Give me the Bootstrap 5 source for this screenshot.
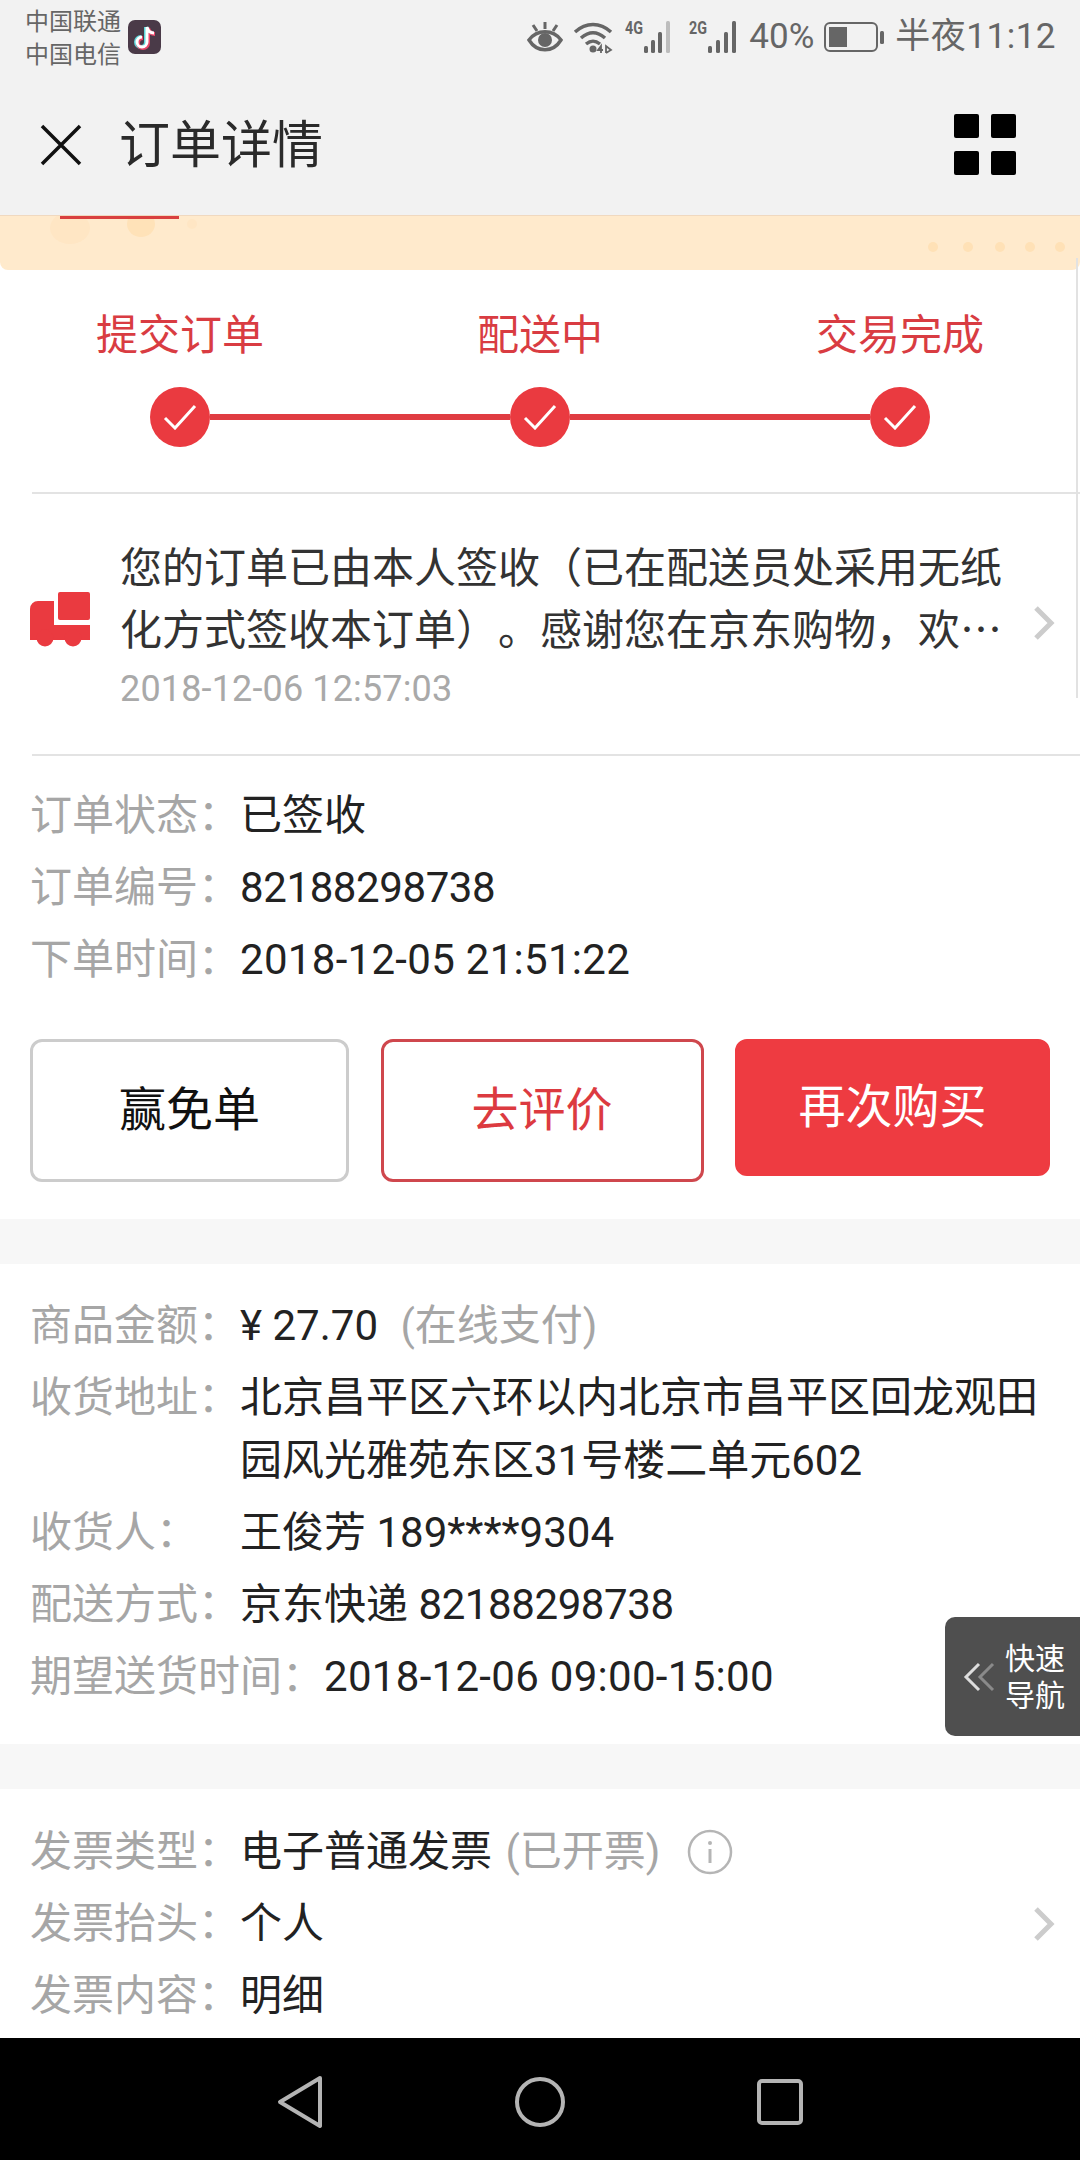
<!DOCTYPE html>
<html lang="zh-CN">
<head>
  <meta charset="UTF-8" />
  <meta name="viewport" content="width=device-width, initial-scale=1.0"/>
  <title>订单详情</title>
  <link rel="stylesheet" href="https://cdn.jsdelivr.net/npm/bootstrap@5.3.0/dist/css/bootstrap.min.css" crossorigin="anonymous" />
  <style>
    html, body { margin: 0; }
    body { width: 1080px; height: 2160px; overflow: hidden; background: #fff; color: #222;
      font-family: Roboto, "Noto Sans CJK SC", sans-serif; font-size: 42px; text-spacing-trim: space-all; }
    /* top chrome */
    .top-chrome { background: #f2f2f2; height: 216px; border-bottom: 1px solid #f0d9c0; }
    .status-bar { height: 74px; padding: 0 24px 0 25px; color: #666; }
    .carrier { font-size: 24px; line-height: 33px; width: 99px; padding-top: 3px; white-space: nowrap; }
    .status-num { font-size: 35px; line-height: 74px; white-space: nowrap; }
    .clock-text { letter-spacing: .5px; margin-left: 11px; }
    .st-gap { margin-left: 10px; }
    .st-near { margin-left: 4px; }
    .head-bar { height: 141px; padding: 0 64px 0 40px; }
    .head-title { font-size: 51px; color: #2a2a2a; margin-left: 37px; line-height: 1; padding-top: 2px; }
    .grid-icon { display: grid; grid-template-columns: 25px 25px; grid-auto-rows: 24px; gap: 13px 12px; }
    .grid-icon span { background: #000; border-radius: 2px; }
    .promo-strip { height: 54px; background: #ffeacc; display: block; border-radius: 0 0 8px 8px; }
    /* progress */
    .steps-box { height: 222px; padding-top: 41px; }
    .step-name { color: #d93c42; font-size: 42px; line-height: 50px; }
    .step-track { padding: 0 150px; margin-top: 26px; }
    .step-dot { width: 60px; height: 60px; border-radius: 50%; background: #ea3a40; flex: none; }
    .step-line { height: 6px; background: #e03c42; flex-grow: 1; }
    .hair-line { height: 2px; background: #e3e3e3; margin-left: 32px; }
    /* logistics message */
    .msg-row { padding: 40px 25px 43px 30px; }
    .truck-icon { margin-bottom: 7px; }
    .msg-body { width: 890px; margin-left: 30px; margin-right: 23px; }
    .msg-text { line-height: 62px; color: #333; font-family: "Noto Sans CJK SC", sans-serif; }
    .msg-date { font-size: 36px; line-height: 44px; margin-top: 9px; color: #a9a9a9; font-family: Roboto, sans-serif; letter-spacing: .15px; }
    /* info rows */
    .info-box { padding: 28px 30px 0 30px; }
    .info-row { line-height: 63px; margin-bottom: 9px; }
    .info-key { color: #a6a6a6; min-width: 210px; flex: none; }
    .info-sub { color: #a6a6a6; }
    .amount-note { margin-left: 12px; }
    .invoice-note { margin-left: 3px; }
    .num-tight { letter-spacing: -.4px; }
    .num-wide { letter-spacing: .3px; }
    .action-row { margin-top: 48px; padding-bottom: 37px; }
    .act-btn { height: 143px; font-size: 47px; border-radius: 12px; border-width: 3px; border-style: solid; background: #fff; padding: 0; }
    .act-gray { width: 319px; border-color: #ccc; color: #111; }
    .act-outline { width: 323px; border-color: #cf474d; color: #dc3a40; }
    .act-solid { width: 315px; height: 137px; background: #ee3b41; border-color: #ee3b41; color: #fff; }
    .gap-band { height: 45px; background: #f7f7f7; }
    .section-two { padding-top: 30px; padding-bottom: 27px; }
    .section-three { padding-top: 31px; }
    .info-glyph { margin-left: 27px; }
    .row-chevron { margin-right: -5px; }
    /* overlays */
    .page-area { position: relative; height: 1822px; overflow: hidden; }
    .quick-nav { position: absolute; right: 0; top: 1401px; width: 135px; height: 119px; background: #4f4f4f;
      border-radius: 10px 0 0 10px; color: #fff; font-size: 30px; line-height: 37px; padding-left: 18px; }
    .quick-text { margin-left: 8px; }
    .scroll-mark { position: absolute; right: 2px; top: 42px; width: 2px; height: 440px; background: #e2e2e2; }
    /* android nav */
    .sys-nav { height: 122px; background: #000; }
    .sys-cell { width: 240px; }
  </style>
</head>
<body>

  <!-- Status bar and title -->
  <div class="top-chrome">
    <div class="status-bar d-flex align-items-center">
      <div class="carrier">中国联通<br>中国电信</div>
      <svg class="ms-1" width="33" height="34" viewBox="0 0 33 34">
        <rect width="33" height="34" rx="7" fill="#4a3a48"/>
        <path d="M19 7v15a5 5 0 1 1-5-5M19 7c1 4 3 6 7 6" fill="none" stroke="#5fd8dc" stroke-width="4" transform="translate(-1 0)"/>
        <path d="M19 7v15a5 5 0 1 1-5-5M19 7c1 4 3 6 7 6" fill="none" stroke="#e8476a" stroke-width="4" transform="translate(1 1)"/>
        <path d="M19 7v15a5 5 0 1 1-5-5M19 7c1 4 3 6 7 6" fill="none" stroke="#fff" stroke-width="3"/>
      </svg>
      <div class="ms-auto d-flex align-items-center">
        <!-- eye -->
        <svg width="36" height="34" viewBox="0 0 36 34">
          <path d="M2 20c8-11 24-11 32 0-8 13-24 13-32 0z" fill="none" stroke="#666" stroke-width="3.5"/>
          <circle cx="18" cy="20" r="7" fill="#666"/>
          <path d="M18 2v7M6 5l4 6M30 5l-4 6" stroke="#666" stroke-width="3"/>
        </svg>
        <!-- wifi -->
        <svg class="st-gap" width="42" height="34" viewBox="0 0 42 34">
          <path d="M2 12c11-10 25-10 36 0M8 18c8-7 16-7 24 0M13 24c5-4 9-4 14 0" fill="none" stroke="#666" stroke-width="3.5"/>
          <circle cx="20" cy="29" r="3.5" fill="#666"/>
          <path d="M28 33v-7l-3 4h5M33 33v-7l5 4-5 3" fill="none" stroke="#666" stroke-width="1.8"/>
        </svg>
        <!-- 4G signal -->
        <svg class="st-gap" width="54" height="46" viewBox="0 -6 54 46">
          <text x="0" y="14" font-family="Roboto" font-weight="700" font-size="19" textLength="18" lengthAdjust="spacingAndGlyphs" fill="#666">4G</text>
          <g fill="#666"><rect x="19" y="26" width="4" height="7" rx="1.5"/><rect x="26" y="20" width="4" height="13" rx="1.5"/><rect x="33" y="12" width="4" height="21" rx="1.5"/></g>
          <rect x="41" y="1" width="4" height="32" rx="1.5" fill="#bdbdbd"/>
        </svg>
        <!-- 2G signal -->
        <svg class="st-gap" width="56" height="46" viewBox="0 -6 56 46">
          <text x="0" y="14" font-family="Roboto" font-weight="700" font-size="19" textLength="18" lengthAdjust="spacingAndGlyphs" fill="#666">2G</text>
          <g fill="#666"><rect x="19" y="26" width="4" height="7" rx="1.5"/><rect x="27" y="20" width="4" height="13" rx="1.5"/><rect x="35" y="12" width="4" height="21" rx="1.5"/><rect x="43" y="1" width="4" height="32" rx="1.5"/></g>
        </svg>
        <span class="status-num st-near">40%</span>
        <!-- battery -->
        <svg class="st-gap" width="60" height="30" viewBox="0 0 60 30">
          <rect x="1" y="1" width="52" height="28" rx="5" fill="none" stroke="#666" stroke-width="2"/>
          <rect x="5" y="5" width="18" height="20" fill="#666"/>
          <rect x="56" y="9" width="4" height="13" rx="1.5" fill="#666"/>
        </svg>
        <span class="status-num clock-text">半夜11:12</span>
      </div>
    </div>
    <div class="head-bar d-flex align-items-center">
      <svg width="42" height="42" viewBox="0 0 42 42"><path d="M2 2l38 38M40 2L2 40" stroke="#111" stroke-width="3.5" fill="none"/></svg>
      <div class="head-title">订单详情</div>
      <div class="grid-icon ms-auto"><span></span><span></span><span></span><span></span></div>
    </div>
  </div>

  <div class="page-area">
    <!-- Banner remnant under the header -->
    <svg class="promo-strip" width="1080" height="54" viewBox="0 0 1080 54">
      <ellipse cx="70" cy="12" rx="20" ry="16" fill="#ffe6c4"/>
      <ellipse cx="141" cy="8" rx="14" ry="13" fill="#ffe2b8"/>
      <circle cx="192" cy="8" r="5" fill="#ffe6c4"/>
      <rect x="60" y="0" width="119" height="3" fill="#d9403f"/>
      <g fill="#ffe1b6"><circle cx="933" cy="31" r="5"/><circle cx="968" cy="31" r="5"/><circle cx="1000" cy="31" r="5"/><circle cx="1030" cy="31" r="5"/><circle cx="1060" cy="31" r="5"/></g>
    </svg>

    <!-- Progress -->
    <div class="steps-box">
      <div class="row g-0 text-center">
        <div class="col-4 step-name">提交订单</div>
        <div class="col-4 step-name">配送中</div>
        <div class="col-4 step-name">交易完成</div>
      </div>
      <div class="step-track d-flex align-items-center">
        <div class="step-dot d-flex align-items-center justify-content-center">
          <svg width="34" height="26" viewBox="0 0 34 26"><path d="M2 14l10 10L32 2" fill="none" stroke="#fff" stroke-width="3"/></svg>
        </div>
        <div class="step-line"></div>
        <div class="step-dot d-flex align-items-center justify-content-center">
          <svg width="34" height="26" viewBox="0 0 34 26"><path d="M2 14l10 10L32 2" fill="none" stroke="#fff" stroke-width="3"/></svg>
        </div>
        <div class="step-line"></div>
        <div class="step-dot d-flex align-items-center justify-content-center">
          <svg width="34" height="26" viewBox="0 0 34 26"><path d="M2 14l10 10L32 2" fill="none" stroke="#fff" stroke-width="3"/></svg>
        </div>
      </div>
    </div>
    <div class="hair-line"></div>

    <!-- Logistics message -->
    <div class="msg-row d-flex align-items-center">
      <svg class="flex-shrink-0 truck-icon" width="60" height="56" viewBox="0 0 60 56">
        <g fill="#ea3a40">
          <rect x="28" y="1" width="32" height="28" rx="2"/>
          <path d="M0 18a8 8 0 0 1 8-8h16v24h36v15H0z"/>
          <circle cx="15" cy="47" r="8.5"/><circle cx="43" cy="47" r="8.5"/>
        </g>
      </svg>
      <div class="msg-body">
        <div class="msg-text">您的订单已由本人签收（已在配送员处采用无纸化方式签收本订单）。感谢您在京东购物，欢…</div>
        <div class="msg-date">2018-12-06 12:57:03</div>
      </div>
      <svg class="flex-shrink-0" width="22" height="34" viewBox="0 0 22 34"><path d="M3 2l15 15L3 32" fill="none" stroke="#ccc" stroke-width="5"/></svg>
    </div>
    <div class="hair-line"></div>

    <!-- Order info -->
    <div class="info-box">
      <div class="info-row d-flex"><span class="info-key">订单状态：</span><span>已签收</span></div>
      <div class="info-row d-flex"><span class="info-key">订单编号：</span><span class="num-tight">82188298738</span></div>
      <div class="info-row d-flex"><span class="info-key">下单时间：</span><span class="num-wide">2018-12-05 21:51:22</span></div>
      <div class="action-row d-flex align-items-start justify-content-between">
        <button type="button" class="btn act-btn act-gray">赢免单</button>
        <button type="button" class="btn act-btn act-outline">去评价</button>
        <button type="button" class="btn act-btn act-solid">再次购买</button>
      </div>
    </div>
    <div class="gap-band"></div>

    <!-- Amount and delivery -->
    <div class="info-box section-two">
      <div class="info-row d-flex"><span class="info-key">商品金额：</span><span>¥ 27.70<span class="info-sub amount-note"> (在线支付)</span></span></div>
      <div class="info-row d-flex"><span class="info-key">收货地址：</span><span>北京昌平区六环以内北京市昌平区回龙观田园风光雅苑东区31号楼二单元602</span></div>
      <div class="info-row d-flex"><span class="info-key">收货人：</span><span>王俊芳 189****9304</span></div>
      <div class="info-row d-flex"><span class="info-key">配送方式：</span><span>京东快递 <span class="num-tight">82188298738</span></span></div>
      <div class="info-row d-flex"><span class="info-key">期望送货时间：</span><span class="num-wide">2018-12-06 09:00-15:00</span></div>
    </div>
    <div class="gap-band"></div>

    <!-- Invoice -->
    <div class="info-box section-three">
      <div class="info-row d-flex align-items-center"><span class="info-key">发票类型：</span><span>电子普通发票 <span class="info-sub invoice-note">(已开票)</span></span>
        <svg class="info-glyph" width="46" height="46" viewBox="0 0 46 46"><circle cx="23" cy="23" r="21" fill="none" stroke="#b5b5b5" stroke-width="2.5"/><circle cx="23" cy="14" r="2" fill="#b5b5b5"/><path d="M23 20v14" stroke="#b5b5b5" stroke-width="3"/></svg>
      </div>
      <div class="info-row d-flex align-items-center"><span class="info-key">发票抬头：</span><span>个人</span>
        <svg class="ms-auto row-chevron" width="22" height="34" viewBox="0 0 22 34"><path d="M3 2l15 15L3 32" fill="none" stroke="#ccc" stroke-width="5"/></svg>
      </div>
      <div class="info-row d-flex"><span class="info-key">发票内容：</span><span>明细</span></div>
    </div>

    <!-- Overlays -->
    <div class="quick-nav d-flex align-items-center">
      <svg width="34" height="32" viewBox="0 0 34 32"><path d="M16 3L3 16l13 13" fill="none" stroke="#ddd" stroke-width="3"/><path d="M30 3L17 16l13 13" fill="none" stroke="#8a8a8a" stroke-width="3"/></svg>
      <div class="quick-text">快速<br>导航</div>
    </div>
    <div class="scroll-mark"></div>
  </div>

  <!-- System navigation -->
  <div class="sys-nav d-flex justify-content-center align-items-center">
    <div class="sys-cell text-center">
      <svg width="48" height="54" viewBox="0 0 48 54"><path d="M44 3L4 27l40 24z" fill="none" stroke="#b4b4b4" stroke-width="4" stroke-linejoin="round"/></svg>
    </div>
    <div class="sys-cell text-center">
      <svg width="52" height="52" viewBox="0 0 52 52"><circle cx="26" cy="26" r="23" fill="none" stroke="#b4b4b4" stroke-width="4"/></svg>
    </div>
    <div class="sys-cell text-center">
      <svg width="46" height="46" viewBox="0 0 46 46"><rect x="2" y="2" width="42" height="42" rx="3" fill="none" stroke="#b4b4b4" stroke-width="4"/></svg>
    </div>
  </div>

  <script src="https://cdn.jsdelivr.net/npm/bootstrap@5.3.0/dist/js/bootstrap.bundle.min.js" crossorigin="anonymous"></script>
</body>
</html>
